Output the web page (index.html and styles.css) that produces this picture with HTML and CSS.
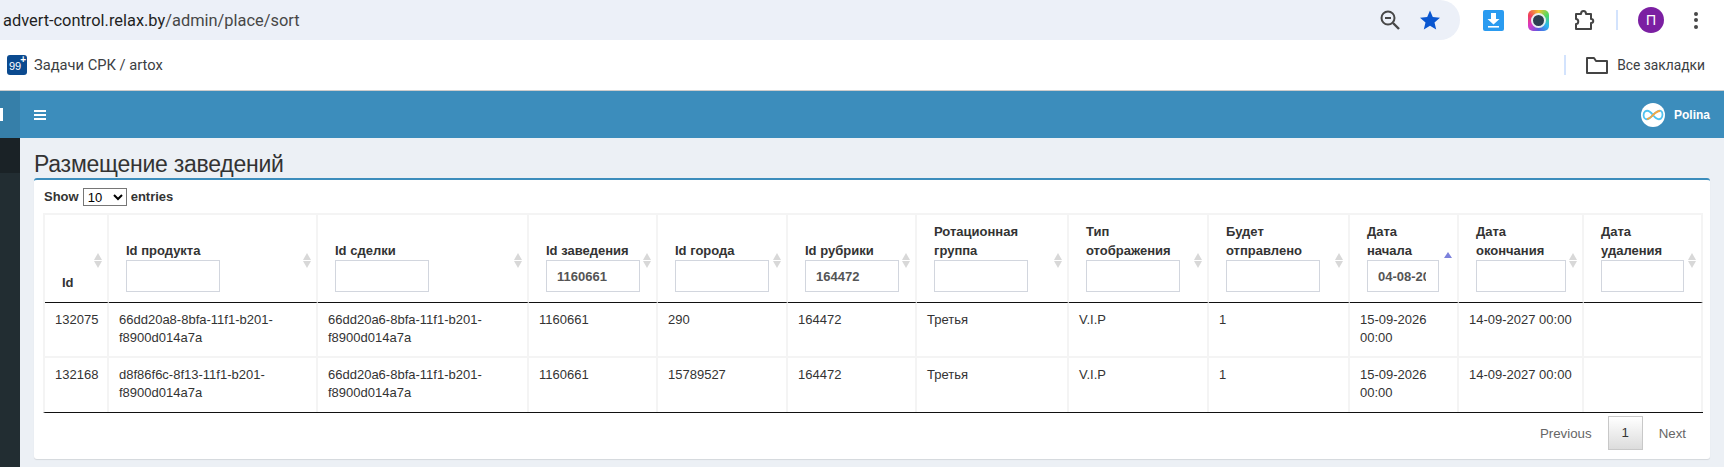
FILE: index.html
```html
<!DOCTYPE html>
<html lang="ru">

<head>
    <meta charset="UTF-8">
    <title>Размещение заведений</title>
    <link rel="stylesheet" href="styles.css">
</head>

<body>
    <div class="toolbar">
        <div class="omnibox">
            <div class="url">advert-control.relax.by<span class="url_path">/admin/place/sort</span></div>
            <svg class="zoom_icon" width="22" height="22" viewBox="0 0 22 22" fill="none" stroke="#474747" stroke-width="2">
                <circle cx="9" cy="9" r="6.5"></circle>
                <path d="M6 9h6"></path>
                <path d="M14 14l6 6" stroke-width="2.4"></path>
            </svg>
            <svg class="star_icon" width="22" height="22" viewBox="0 0 22 22">
                <path fill="#0b57d0" d="M11 1.5l2.8 6.6 7.2.6-5.5 4.7 1.7 7-6.2-3.7-6.2 3.7 1.7-7L1 8.7l7.200-.6z"></path>
            </svg>
        </div>
        <div class="ext_icons">
            <svg class="ext" width="21" height="21" viewBox="0 0 21 21">
                <rect width="21" height="21" rx="2" fill="#2a9bf0"></rect>
                <path fill="#fff" d="M8 3h5v6h3.500l-6 5.500-6-5.500H8z"></path>
                <rect x="5" y="16" width="11" height="1.600" fill="#fff"></rect>
            </svg>
            <div class="camera"><div class="camera_lens"></div></div>
            <svg class="ext" width="22" height="22" viewBox="0 0 22 22" fill="none" stroke="#444" stroke-width="2" stroke-linejoin="round">
                <path d="M2 5h5c0-4 5-4 5 0h5v5c3 0 3 4 0 4v6H2v-5c3 0 3-5 0-5z"></path>
            </svg>
            <div class="bar_sep"></div>
            <div class="profile">П</div>
            <div class="dots"><span></span><span></span><span></span></div>
        </div>
    </div>

    <div class="bookmarks">
        <div class="bm_icon">99<sup>+</sup></div>
        <div class="bm_title">Задачи СРК / artox</div>
        <div class="bm_right">
            <div class="bar_sep"></div>
            <svg class="folder" width="22" height="18" viewBox="0 0 22 18" fill="none" stroke="#444" stroke-width="2" stroke-linejoin="round">
                <path d="M1 2h7l2 3h11v12H1z"></path>
            </svg>
            <div class="bm_all">Все закладки</div>
        </div>
    </div>

    <div class="app">
        <div class="sidebar">
            <div class="side_logo"><span class="side_mark"></span></div>
            <div class="side_user"></div>
            <div class="side_menu"></div>
        </div>
        <div class="main">
            <div class="navbar">
                <div class="burger"><span></span><span></span><span></span></div>
                <div class="nav_user">
                    <svg class="nav_avatar" width="24" height="24" viewBox="0 0 24 24" fill="none" stroke-width="1.800">
                        <circle cx="12" cy="12" r="12" fill="#fff" stroke="none"></circle>
                        <path stroke="#4fc3f0" d="M12 12C9 8 6 7 4 8.500S2 15 4.500 16 9 15 12 12s6-5 8-4 2 6 0 7.500-5 .5-8-3.500"></path>
                        <path stroke="#f5a742" d="M6 16c3 0 4-2 6-4s4-4 7-4"></path>
                    </svg>
                    <span>Polina</span>
                </div>
            </div>
            <div class="content">
                <h1 class="page_title">Размещение заведений</h1>
                <div class="box">
                    <div class="length">
                        Show
                        <select class="length_select">
                            <option>10</option>
                        </select>
                        entries
                    </div>
                    <table class="grid">
                        <colgroup>
                            <col class="c_id">
                            <col class="c_uuid">
                            <col class="c_uuid2">
                            <col class="c_num">
                            <col class="c_num2">
                            <col class="c_num">
                            <col class="c_rot">
                            <col class="c_type">
                            <col class="c_send">
                            <col class="c_start">
                            <col class="c_end">
                            <col class="c_del">
                        </colgroup>
                        <thead>
                            <tr>
                                <th class="sort">Id</th>
                                <th class="sort">Id продукта<input class="filter" type="text"></th>
                                <th class="sort">Id сделки<input class="filter" type="text"></th>
                                <th class="sort">Id заведения<input class="filter" type="text" value="1160661"></th>
                                <th class="sort">Id города<input class="filter" type="text"></th>
                                <th class="sort">Id рубрики<input class="filter" type="text" value="164472"></th>
                                <th class="sort">Ротационная<br>группа<input class="filter" type="text"></th>
                                <th class="sort">Тип<br>отображения<input class="filter" type="text"></th>
                                <th class="sort">Будет<br>отправлено<input class="filter" type="text"></th>
                                <th class="sort sort_asc">Дата<br>начала<input class="filter filter_start" type="text" value="04-08-2026"></th>
                                <th class="sort">Дата<br>окончания<input class="filter filter_end" type="text"></th>
                                <th class="sort">Дата<br>удаления<input class="filter filter_del" type="text"></th>
                            </tr>
                        </thead>
                        <tbody>
                            <tr>
                                <td>132075</td>
                                <td>66dd20a8-8bfa-11f1-b201-f8900d014a7a</td>
                                <td>66dd20a6-8bfa-11f1-b201-f8900d014a7a</td>
                                <td>1160661</td>
                                <td>290</td>
                                <td>164472</td>
                                <td>Третья</td>
                                <td>V.I.P</td>
                                <td>1</td>
                                <td>15-09-2026 00:00</td>
                                <td>14-09-2027 00:00</td>
                                <td></td>
                            </tr>
                            <tr>
                                <td>132168</td>
                                <td>d8f86f6c-8f13-11f1-b201-f8900d014a7a</td>
                                <td>66dd20a6-8bfa-11f1-b201-f8900d014a7a</td>
                                <td>1160661</td>
                                <td>15789527</td>
                                <td>164472</td>
                                <td>Третья</td>
                                <td>V.I.P</td>
                                <td>1</td>
                                <td>15-09-2026 00:00</td>
                                <td>14-09-2027 00:00</td>
                                <td></td>
                            </tr>
                        </tbody>
                    </table>
                    <div class="paginate">
                        <span class="page_link">Previous</span>
                        <span class="page_cur">1</span>
                        <span class="page_link">Next</span>
                    </div>
                </div>
            </div>
        </div>
    </div>
</body>

</html>
```

FILE: styles.css
```css
* {
    margin: 0;
    padding: 0;
    box-sizing: border-box;
}

html,
body {
    height: 467px;
    overflow: hidden;
}

body {
    background-color: #fff;
    font-family: "Liberation Sans", Arial, sans-serif;
    color: #333;
}

/* browser bars */
.toolbar {
    height: 40px;
    display: flex;
    align-items: center;
}

.omnibox {
    width: 1460px;
    height: 40px;
    background: #ecf0f8;
    border-radius: 0 20px 20px 0;
    display: flex;
    align-items: center;
    padding-left: 3px;
}

.url {
    font-family: Roboto, sans-serif;
    font-size: 16.400px;
    color: #1f1f1f;
    flex: 1;
}

.url_path {
    color: #474747;
}

.zoom_icon {
    margin-right: 18px;
}

.star_icon {
    margin-right: 19px;
}

.ext_icons {
    flex: 1;
    display: flex;
    align-items: center;
    padding-left: 23px;
}

.ext {
    display: block;
}

.camera {
    width: 21px;
    height: 21px;
    margin: 0 25px 0 24px;
    border-radius: 5px;
    background: conic-gradient(#f4c430, #4cd964, #2ab7f0, #5a5ce0, #d838c8, #f0405a, #f4c430);
    display: flex;
    align-items: center;
    justify-content: center;
}

.camera_lens {
    width: 15px;
    height: 15px;
    border-radius: 50%;
    background: #2c3e50;
    border: 2px solid #e8eef2;
}

.bar_sep {
    width: 2px;
    height: 20px;
    background: #d3e3fd;
}

.toolbar .bar_sep {
    margin-left: 20px;
}

.profile {
    width: 26px;
    height: 26px;
    margin-left: 20px;
    border-radius: 50%;
    background: #7b1fa2;
    color: #fff;
    font-size: 14px;
    line-height: 26px;
    text-align: center;
}

.dots {
    margin-left: 30px;
    display: flex;
    flex-direction: column;
    gap: 2.5px;
}

.dots span {
    width: 4px;
    height: 4px;
    border-radius: 50%;
    background: #474747;
}

.bookmarks {
    height: 51px;
    border-bottom: 1px solid #ccc;
    display: flex;
    align-items: center;
    padding: 0 19px 0 7px;
}

.bm_icon {
    width: 20px;
    height: 20px;
    border-radius: 3px;
    background: #0b4a8f;
    color: #fff;
    font-size: 11px;
    line-height: 23px;
    padding-left: 2px;
    position: relative;
}

.bm_icon sup {
    position: absolute;
    top: -7px;
    right: 1px;
    font-size: 10px;
    font-weight: bold;
}

.bm_title {
    margin-left: 7px;
    font-family: Roboto, sans-serif;
    font-size: 14.700px;
    color: #3c4043;
}

.bm_right {
    margin-left: auto;
    display: flex;
    align-items: center;
}

.folder {
    margin-left: 20px;
}

.bm_all {
    margin-left: 9px;
    font-family: Roboto, sans-serif;
    font-size: 13.800px;
    color: #3c4043;
}

/* page */
.app {
    display: flex;
    height: 376px;
}

.sidebar {
    width: 20px;
    display: flex;
    flex-direction: column;
}

.side_logo {
    height: 47px;
    background: #367fa9;
    display: flex;
    align-items: center;
}

.side_mark {
    width: 3px;
    height: 13px;
    background: #fff;
}

.side_user {
    height: 35px;
    background: #1a2226;
}

.side_menu {
    flex: 1;
    background: #222d32;
}

.main {
    flex: 1;
    background: #ecf0f5;
    display: flex;
    flex-direction: column;
}

.navbar {
    height: 47px;
    background: #3c8dbc;
    display: flex;
    align-items: center;
    justify-content: space-between;
    padding: 0 14px;
}

.burger {
    display: flex;
    flex-direction: column;
    gap: 2px;
}

.burger span {
    width: 12px;
    height: 2px;
    background: #fff;
}

.nav_user {
    display: flex;
    align-items: center;
    gap: 9px;
    color: #fff;
    font-size: 12px;
    font-weight: bold;
}

.content {
    padding: 12px 14px 0;
}

.page_title {
    font-size: 23px;
    letter-spacing: -0.25px;
    font-weight: normal;
    line-height: 28px;
    color: #333;
}

.box {
    height: 281px;
    background: #fff;
    border-top: 2px solid #3c8dbc;
    border-radius: 3px;
    box-shadow: 0 1px 1px rgba(0, 0, 0, 0.1);
    padding: 8px 7px 0 10px;
}

.length {
    height: 25px;
    font-size: 13px;
    font-weight: bold;
    display: flex;
    align-items: flex-start;
    gap: 4px;
    line-height: 18px;
    color: #333;
}

.length_select {
    width: 44px;
    height: 18px;
    border: 1px solid #767676;
    border-radius: 0;
    background: #fff;
    font-family: "Liberation Sans", Arial, sans-serif;
    font-size: 13px;
}

.grid {
    width: 1660px;
    margin-left: -1px;
    border-collapse: separate;
    border-spacing: 0;
    table-layout: fixed;
    font-size: 13px;
    border-top: 2px solid #f4f4f4;
    border-left: 2px solid #f4f4f4;
    border-bottom: 1px solid #111;
}

.c_id {
    width: 64px;
}

.c_uuid {
    width: 209px;
}

.c_uuid2 {
    width: 211px;
}

.c_num {
    width: 129px;
}

.c_num2 {
    width: 130px;
}

.c_rot {
    width: 152px;
}

.c_type {
    width: 140px;
}

.c_send {
    width: 141px;
}

.c_start {
    width: 109px;
}

.c_end {
    width: 125px;
}

.c_del {
    width: 119px;
}

.grid th {
    position: relative;
    height: 88px;
    padding: 0 10px 10px 17px;
    border-right: 2px solid #f4f4f4;
    border-bottom: 1px solid #111;
    vertical-align: bottom;
    text-align: left;
    line-height: 19px;
    font-weight: bold;
}

.grid td {
    height: 55px;
    padding: 8px 10px 9px;
    border-right: 2px solid #f4f4f4;
    border-bottom: 2px solid #f4f4f4;
    vertical-align: top;
    line-height: 18px;
    color: #333;
}

.grid tbody tr:last-child td {
    height: 54px;
    border-bottom: 0;
}

.filter {
    display: block;
    width: 94px;
    height: 32px;
    padding: 0 12px 0 10px;
    border: 1px solid #d2d6de;
    font-family: "Liberation Sans", Arial, sans-serif;
    font-size: 13px;
    font-weight: bold;
    color: #555;
    background: #fff;
}

.filter_start {
    width: 72px;
}

.filter_end {
    width: 90px;
}

.filter_del {
    width: 83px;
}

/* sort arrows */
.sort::before,
.sort::after {
    content: "";
    position: absolute;
    right: 5px;
    border-left: 4px solid transparent;
    border-right: 4px solid transparent;
}

.sort::before {
    top: 38px;
    border-bottom: 7px solid #d8d8d8;
}

.sort::after {
    top: 46px;
    border-top: 7px solid #d8d8d8;
}

.sort_asc::before {
    top: 37px;
    border-bottom: 6px solid #7c82dc;
}

.sort_asc::after {
    border-top-color: transparent;
}

.paginate {
    display: flex;
    justify-content: flex-end;
    align-items: center;
    padding: 3px 17px 0 0;
    font-size: 13.300px;
}

.page_link {
    color: #666;
}

.page_cur {
    width: 35px;
    height: 34px;
    margin: 0 16px;
    border: 1px solid #c8c8c8;
    background: linear-gradient(#fff, #dcdcdc);
    line-height: 32px;
    text-align: center;
    color: #333;
}
```
